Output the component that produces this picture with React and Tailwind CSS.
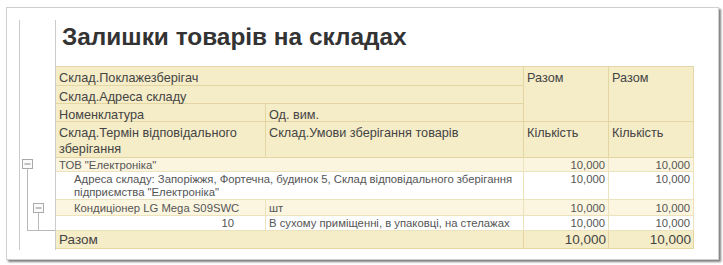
import React from "react";

const H = "bg-[#f5ecc8] border-r border-b border-[#e4d6a2] px-[3px] pt-[3px] text-[12.7px] leading-[16px] text-[#444]";
const D = "border-r border-b border-[#ece2bc] px-[3px] pt-[1px] text-[11.3px] leading-[13px] text-[#555]";

export default function App() {
  return (
    <div className="w-[723px] h-[265px] bg-white pt-[7px] pl-[6px]" style={{ fontFamily: '"Liberation Sans", Arial, sans-serif' }}>
      <div className="w-[713px] h-[253px] border border-[#cfcfcf] bg-white shadow-[2px_2px_2px_rgba(0,0,0,0.5)] pt-[12px] pl-[12px] flex">
        <div className="w-[37px] h-[230px] border-l border-r border-[#cbcbcb]">
          <svg width="35" height="230" viewBox="0 0 35 230">
            <g stroke="#b9b9b9" strokeWidth="1" fill="none">
              <line x1="7.5" y1="148" x2="7.5" y2="210.5" />
              <line x1="7" y1="210.5" x2="35" y2="210.5" />
              <line x1="18.5" y1="192" x2="18.5" y2="210.5" />
            </g>
            <rect x="2.5" y="139.5" width="10" height="9" fill="#fafafa" stroke="#aaa" />
            <line x1="4.5" y1="144" x2="10.5" y2="144" stroke="#888" />
            <rect x="13.5" y="183.5" width="10" height="9" fill="#fafafa" stroke="#aaa" />
            <line x1="15.5" y1="188" x2="21.5" y2="188" stroke="#888" />
          </svg>
        </div>
        <div className="flex flex-col">
          <div className="mt-[3px] pl-[6px] text-[24.4px] leading-[28px] font-bold text-[#333]">
            Залишки товарів на складах
          </div>
          <div className="mt-[15px] grid grid-cols-[210px_258px_85px_85px] grid-rows-[19px_18px_18px_36px_14px_28px_16px_15px_18px] border-t border-[#e4d6a2]">
            <div className={`${H} col-span-2`}>Склад.Поклажезберігач</div>
            <div className={`${H} row-span-3`}>Разом</div>
            <div className={`${H} row-span-3`}>Разом</div>
            <div className={`${H} col-span-2`}>Склад.Адреса складу</div>
            <div className={H}>Номенклатура</div>
            <div className={H}>Од. вим.</div>
            <div className={H}>Склад.Термін відповідального зберігання</div>
            <div className={H}>Склад.Умови зберігання товарів</div>
            <div className={H}>Кількість</div>
            <div className={H}>Кількість</div>

            <div className={`${D} col-span-2 bg-[#fbf5df]`}>ТОВ "Електроніка"</div>
            <div className={`${D} bg-[#fbf5df] text-right`}>10,000</div>
            <div className={`${D} bg-[#fbf5df] text-right`}>10,000</div>

            <div className={`${D} col-span-2 bg-white pl-[18px]`}>
              Адреса складу: Запоріжжя, Фортечна, будинок 5, Склад відповідального зберігання підприємства "Електроніка"
            </div>
            <div className={`${D} bg-white text-right`}>10,000</div>
            <div className={`${D} bg-white text-right`}>10,000</div>

            <div className={`${D} bg-[#fcf6e1] pl-[18px] pt-[2px]`}>Кондиціонер LG Mega S09SWC</div>
            <div className={`${D} bg-[#fcf6e1] pt-[2px]`}>шт</div>
            <div className={`${D} bg-[#fcf6e1] text-right pt-[2px]`}>10,000</div>
            <div className={`${D} bg-[#fcf6e1] text-right pt-[2px]`}>10,000</div>

            <div className={`${D} bg-white text-right pr-[31px]`}>10</div>
            <div className={`${D} bg-white`}>В сухому приміщенні, в упаковці, на стелажах</div>
            <div className={`${D} bg-white text-right`}>10,000</div>
            <div className={`${D} bg-white text-right`}>10,000</div>

            <div className="col-span-2 bg-[#f5ecc8] border-r border-b border-[#e4d6a2] px-[3px] pt-[1px] text-[13.5px] leading-[16px] text-[#444]">Разом</div>
            <div className="bg-[#f5ecc8] border-r border-b border-[#e4d6a2] px-[2px] pt-[1px] text-[13.5px] leading-[16px] text-[#444] text-right">10,000</div>
            <div className="bg-[#f5ecc8] border-r border-b border-[#e4d6a2] px-[2px] pt-[1px] text-[13.5px] leading-[16px] text-[#444] text-right">10,000</div>
          </div>
        </div>
      </div>
    </div>
  );
}
